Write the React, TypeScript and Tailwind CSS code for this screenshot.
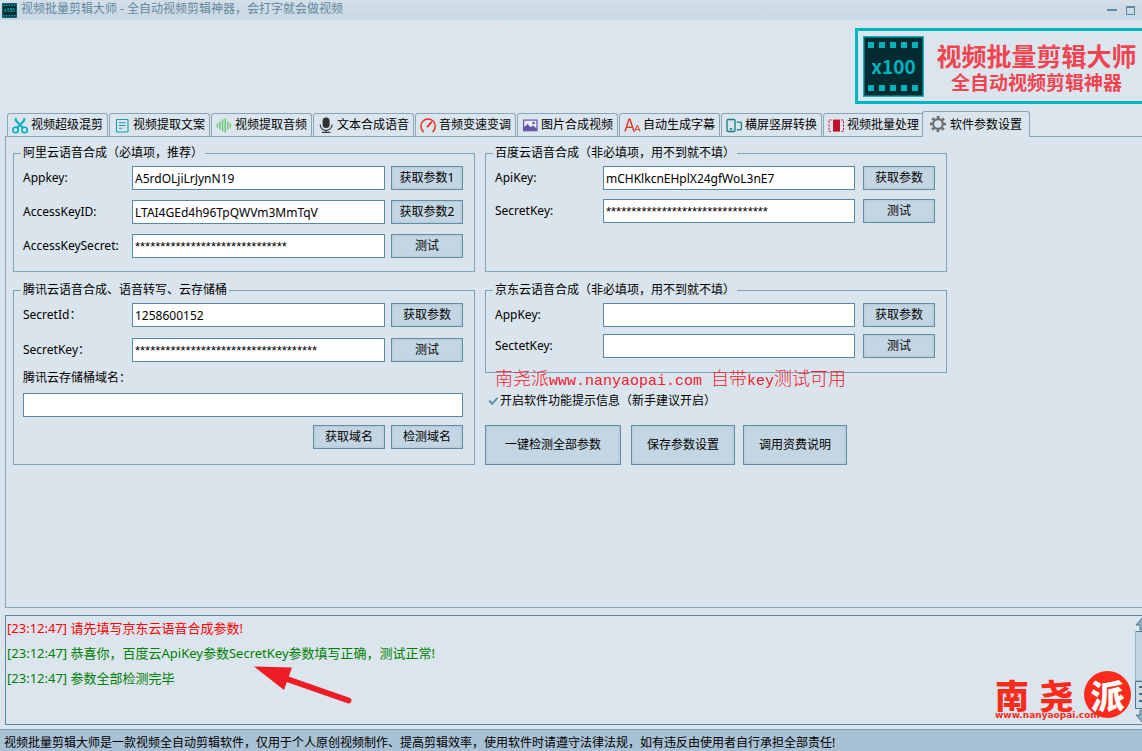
import type { ReactNode } from 'react';

const ui = 'font-["Noto_Sans","Noto_Sans_CJK_SC",sans-serif]';
const cjk = 'font-["Noto_Sans_CJK_SC",sans-serif]';

function FilmIcon({ className }: { className: string }) {
  const holes = [5, 16, 27, 38, 49];
  return (
    <svg viewBox="0 0 61 61" className={className} aria-hidden="true">
      <rect x="0.5" y="0.5" width="60" height="60" fill="#022c31" stroke="#00b3be" />
      <rect x="1.5" y="1.5" width="58" height="58" fill="none" stroke="#0a6a72" />
      {holes.map((x) => (
        <g key={x} fill="#00b3be">
          <rect x={x} y="6" width="6" height="6" />
          <rect x={x} y="49" width="6" height="6" />
        </g>
      ))}
      <text x="30.5" y="38" textAnchor="middle" fontSize="19" fontWeight="700" fontFamily="Noto Sans CJK SC, sans-serif" fill="#00b3be">
        x100
      </text>
    </svg>
  );
}

const icons: Record<string, ReactNode> = {
  scissors: (
    <g fill="none" stroke="#00b0c0" strokeWidth="1.6">
      <circle cx="3.6" cy="13" r="2.7" />
      <circle cx="12.6" cy="13" r="2.7" />
      <path d="M3.6 1.2 4 3.8 11 11M12.4 1.2 12 3.8 5 11" strokeWidth="2" />
    </g>
  ),
  doc: (
    <g fill="none" stroke="#1a9aae" strokeWidth="1.1">
      <rect x="2.5" y="2.5" width="11.5" height="12.5" rx="0.8" />
      <path d="M5 5.8h6.5M5 8.5h6.5M5 11.3h3.5" />
    </g>
  ),
  wave: (
    <path d="M1.5 7v3M4 5v7M6.6 3v11M9.2 2v13M11.8 5v7M14.3 7v3" fill="none" stroke="#67c66d" strokeWidth="1.4" strokeLinecap="round" />
  ),
  mic: (
    <g fill="none" stroke="#3a3a3a" strokeWidth="1.2">
      <rect x="4.6" y="0.6" width="7" height="10.4" rx="3.5" fill="#303030" stroke="none" />
      <path d="M2.3 7.5v.8a5.8 5 0 0 0 11.6 0v-.8M8.1 13.3v1.7M3.8 15.4h8.6" />
    </g>
  ),
  gauge: (
    <g fill="none" stroke="#e63020" strokeWidth="1.5" strokeLinecap="round">
      <path d="M3.3 14.6A7.2 7.2 0 1 1 12.9 14.6" />
      <path d="m7.6 9.6 3.6-4.2" strokeWidth="1.8" />
    </g>
  ),
  image: (
    <g>
      <rect x="1.6" y="3.1" width="13.4" height="10.6" fill="#e8ecf6" stroke="#6355a4" strokeWidth="1.2" />
      <path d="M2 13.3V10l3.6-3 3 3.3 2.2-1.8 4 3v1.8z" fill="#6355a4" />
      <circle cx="11.6" cy="6" r="1.3" fill="#6355a4" />
    </g>
  ),
  letters: (
    <g fill="none" stroke="#e03424" strokeWidth="1.4">
      <path d="M1 14.5 5 2.2h1L10 14.5M2.6 10.4h5.8" />
      <path d="m10.6 14.5 2.4-6h.6l2.4 6M11.4 12.4h3.8" strokeWidth="1" />
    </g>
  ),
  rotate: (
    <g fill="none" stroke="#128080" strokeWidth="1.3">
      <rect x="1" y="2.5" width="8" height="12" rx="1" />
      <path d="M10.8 5.2h3.6a1 1 0 0 1 1 1v5.6a1 1 0 0 1-1 1h-3.6M3.6 12h2.8" />
    </g>
  ),
  batch: (
    <g fill="none" stroke="#d0102c">
      <rect x="5" y="2.6" width="7" height="12" fill="#c0142e" stroke="none" />
      <path d="M3.5 3H1v11.4h2.5M13.2 3h2.3v11.4h-2.3" strokeDasharray="2.2 1.2" />
    </g>
  ),
  gear: (
    <g fill="none" stroke="#6b6b6b">
      <circle cx="8" cy="8" r="4.9" strokeWidth="2.2" />
      <circle cx="8" cy="8" r="7" strokeWidth="2.2" strokeDasharray="2.75 2.75" strokeDashoffset="1.4" />
    </g>
  ),
};

const tabs = [
  ['scissors', '视频超级混剪'],
  ['doc', '视频提取文案'],
  ['wave', '视频提取音频'],
  ['mic', '文本合成语音'],
  ['gauge', '音频变速变调'],
  ['image', '图片合成视频'],
  ['letters', '自动生成字幕'],
  ['rotate', '横屏竖屏转换'],
  ['batch', '视频批量处理'],
  ['gear', '软件参数设置'],
];

function Tab({ icon, label, active }: { icon: string; label: string; active: boolean }) {
  const base = 'flex shrink-0 items-center rounded-t-[3px] border border-b-0 border-[#8aa5b4] whitespace-nowrap';
  const state = active
    ? 'relative z-10 -ml-[3px] -mb-px h-[26px] w-[108px] gap-[3px] bg-[#dae4ed] pl-[7px]'
    : 'h-[23px] w-[101px] gap-0.5 bg-[#dbe5ee] pl-1';
  return (
    <button type="button" role="tab" aria-selected={active} className={`${base} ${state}`}>
      <svg viewBox="0 0 17 17" className="size-[17px] shrink-0" aria-hidden="true">
        {icons[icon]}
      </svg>
      {label}
    </button>
  );
}

function Button({ children, className = 'h-6 w-[72px]' }: { children: ReactNode; className?: string }) {
  return (
    <button
      type="button"
      className={`shrink-0 border border-[#5f8da5] bg-[#c4d6e3] text-center inset-shadow-[0_0_3px_#a5bfcf] ${className}`}
    >
      {children}
    </button>
  );
}

interface FieldProps {
  id: string;
  label: string;
  value?: string;
  action: string;
  wide?: boolean;
}

function Field({ id, label, value = '', action, wide }: FieldProps) {
  const masked = value.startsWith('*');
  return (
    <div className={`flex h-6 items-center ${wide ? 'gap-2' : 'gap-1.5'}`}>
      <div className="flex h-6 flex-1 items-center">
        <label htmlFor={id} className={wide ? 'w-[108px] shrink-0' : 'w-[109px] shrink-0'}>
          {label}
        </label>
        <input
          id={id}
          type="text"
          defaultValue={value}
          className={`h-6 w-0 flex-1 border border-[#5889a3] bg-white px-0.5 ${
            masked ? 'font-["Liberation_Sans",sans-serif] text-[13px]' : ''
          }`}
        />
      </div>
      <Button>{action}</Button>
    </div>
  );
}

function Group({ title, className, children }: { title: string; className: string; children: ReactNode }) {
  return (
    <fieldset className="min-w-0 border border-[#7fa2b5] pr-[11px] pl-[9px]">
      <legend className="-ml-0.5 h-[18px] px-0.5 leading-[18px]">{title}</legend>
      <div className={`flex flex-col pt-1 ${className}`}>{children}</div>
    </fieldset>
  );
}

function Brand() {
  return (
    <div className="flex h-[76px] w-[287px] gap-3 border-[3px] border-r-0 border-[#00b6c2] p-[5px]">
      <FilmIcon className="size-[61px] shrink-0" />
      <div className={`flex flex-1 flex-col items-center whitespace-nowrap text-[#f04450] ${cjk}`}>
        <span className="mt-1 text-[25px] leading-[30px] font-bold">视频批量剪辑大师</span>
        <span className="text-[19px] leading-6 font-bold">全自动视频剪辑神器</span>
      </div>
    </div>
  );
}

function ScrollBar() {
  return (
    <svg viewBox="0 0 7 108" className="h-[108px] w-[7px] shrink-0" aria-hidden="true">
      <rect x="0.5" y="15.5" width="10" height="49" fill="#c3d5e2" stroke="#9bb5c6" />
      <path d="M1 15.5h7M1 65.5h7M1 92.5h7" stroke="#487c99" />
      <rect x="0.5" y="65.5" width="10" height="27" fill="#cbdae5" stroke="#487c99" />
      <path d="M4 71h4M4 78h4M4 85h4" stroke="#3f7592" strokeWidth="2" />
      <path d="M8 1 1 9h4v5h4zM8 107l-7-8h4v-5h4z" fill="#8fb0c3" stroke="#487c99" />
    </svg>
  );
}

function Watermark() {
  return (
    <div className={`absolute right-[11px] bottom-1 h-[49px] w-[136px] font-black text-[#fd2b1c] ${cjk}`}>
      <div className="flex items-center justify-between">
        <span className="text-[34px] leading-[47px]">南</span>
        <span className="text-[34px] leading-[47px]">尧</span>
        <span className="flex size-[47px] items-center justify-center rounded-full bg-[#fd2b1c] text-[34px] leading-none text-white">
          派
        </span>
      </div>
      <span className='absolute bottom-0 left-0 font-["DejaVu_Sans",sans-serif] text-[9px] leading-[10px] font-bold'>
        www.nanyaopai.com
      </span>
    </div>
  );
}

export default function App() {
  return (
    <div className={`flex min-h-screen flex-col overflow-hidden bg-[#dbe5ee] text-[12px] leading-[18px] text-black ${ui}`}>
      <header className="flex h-5 shrink-0 items-center bg-linear-to-b from-[#d3dfe9] to-[#c8d8e5] pr-[7px] pl-0.5 text-[#64889f]">
        <FilmIcon className="mr-1 size-[15px]" />
        <h1 className="flex-1 pb-0.5">视频批量剪辑大师 - 全自动视频剪辑神器，会打字就会做视频</h1>
        <button type="button" aria-label="最小化" className="mr-[9px] h-0.5 w-2.5 bg-[#5b8aa4]" />
        <button type="button" aria-label="最大化" className="size-[9px] border border-t-2 border-[#5b8aa4]" />
      </header>

      <div className="flex h-[91px] shrink-0 justify-end pt-2">
        <Brand />
      </div>

      <div role="tablist" className="flex h-[25px] shrink-0 items-end gap-px pl-[7px]">
        {tabs.map(([icon, label], i) => (
          <Tab key={icon} icon={icon} label={label} active={i === tabs.length - 1} />
        ))}
      </div>

      <main className="ml-[5px] flex-1 border border-r-0 border-[#8aa5b4] bg-[#dae4ed] p-[7px]">
        <div className="grid grid-cols-[462px_462px] gap-x-2.5 gap-y-[9px]">
          <Group title="阿里云语音合成（必填项，推荐）" className="gap-2.5 pb-[13px]">
            <Field id="ali-appkey" label="Appkey:" value="A5rdOLjiLrJynN19" action="获取参数1" />
            <Field id="ali-id" label="AccessKeyID:" value="LTAI4GEd4h96TpQWVm3MmTqV" action="获取参数2" />
            <Field id="ali-secret" label="AccessKeySecret:" value={'*'.repeat(30)} action="测试" />
          </Group>

          <Group title="百度云语音合成（非必填项，用不到就不填）" className="gap-[9px]">
            <Field wide id="baidu-key" label="ApiKey:" value="mCHKlkcnEHplX24gfWoL3nE7" action="获取参数" />
            <Field wide id="baidu-secret" label="SecretKey:" value={'*'.repeat(32)} action="测试" />
          </Group>

          <Group title="腾讯云语音合成、语音转写、云存储桶" className="pb-3.5">
            <div className="flex flex-col gap-[11px]">
              <Field id="tx-id" label="SecretId：" value="1258600152" action="获取参数" />
              <Field id="tx-key" label="SecretKey：" value={'*'.repeat(36)} action="测试" />
            </div>
            <label htmlFor="tx-domain" className="leading-[31px]">
              腾讯云存储桶域名：
            </label>
            <input id="tx-domain" type="text" className="h-6 border border-[#5889a3] bg-white px-0.5" />
            <div className="mt-2 flex justify-end gap-1.5">
              <Button>获取域名</Button>
              <Button>检测域名</Button>
            </div>
          </Group>

          <div>
            <div className="relative">
              <Group title="京东云语音合成（非必填项，用不到就不填）" className="gap-[7px] pb-3.5">
                <Field wide id="jd-key" label="AppKey:" action="获取参数" />
                <Field wide id="jd-secret" label="SectetKey:" action="测试" />
              </Group>
              <p className='absolute top-full left-2.5 -mt-1.5 font-["Liberation_Mono",monospace] text-[15px] leading-5 whitespace-pre text-[#f0202c]'>
                <span className={`text-[18px] font-light ${cjk}`}>南尧派</span>www.nanyaopai.com{' '}
                <span className={`text-[18px] font-light ${cjk}`}>自带</span>key
                <span className={`text-[18px] font-light ${cjk}`}>测试可用</span>
              </p>
            </div>
            <label className="mt-[19px] flex items-center gap-px pl-[3px]">
              <input type="checkbox" defaultChecked className="peer sr-only" />
              <svg viewBox="0 0 11 10" className="invisible h-2.5 w-[11px] peer-checked:visible" aria-hidden="true">
                <path d="m1.2 4.6 3 3.2L9.6 1.8" fill="none" stroke="#5b8ca8" strokeWidth="2" />
              </svg>
              开启软件功能提示信息（新手建议开启）
            </label>
            <div className="mt-[15px] flex">
              <Button className="mr-2.5 h-10 w-[136px]">一键检测全部参数</Button>
              <Button className="mr-2 h-10 w-[104px]">保存参数设置</Button>
              <Button className="h-10 w-[104px]">调用资费说明</Button>
            </div>
          </div>
        </div>
      </main>

      <section className="relative mt-[7px] mb-1 ml-[5px] flex h-[110px] shrink-0 border border-r-0 border-[#5889a3] text-[13px] leading-[25px] text-[#008000]">
        <div className="flex-1 pl-px">
          <p className="text-[#ff0000]">[23:12:47] 请先填写京东云语音合成参数!</p>
          <p>[23:12:47] 恭喜你，百度云ApiKey参数SecretKey参数填写正确，测试正常!</p>
          <p>[23:12:47] 参数全部检测完毕</p>
        </div>
        <ScrollBar />
        <svg viewBox="0 0 98 40" className="absolute top-[49px] left-[248px] h-10 w-[98px]" aria-hidden="true">
          <path d="M0 1.5 38 2.5 30 25z" fill="#ee1c24" />
          <path d="M30 13 94.5 35.5" stroke="#ee1c24" strokeWidth="6" strokeLinecap="round" />
        </svg>
        <Watermark />
      </section>

      <footer className="h-[22px] shrink-0 border-t border-[#7b9fb5] bg-[#a9c1d5] pl-1 leading-[25px] whitespace-nowrap">
        视频批量剪辑大师是一款视频全自动剪辑软件，仅用于个人原创视频制作、提高剪辑效率，使用软件时请遵守法律法规，如有违反由使用者自行承担全部责任!
      </footer>
    </div>
  );
}
